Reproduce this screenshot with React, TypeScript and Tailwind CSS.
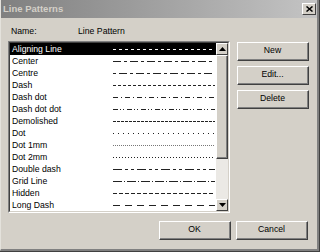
import React from "react";

type Pat = { name: string; dash: string; color?: string };

const patterns: Pat[] = [
  { name: "Aligning Line", dash: "3 3" },
  { name: "Center", dash: "8 3 3 3" },
  { name: "Centre", dash: "3 3 8 3" },
  { name: "Dash", dash: "3 2" },
  { name: "Dash dot", dash: "5 3 1 3" },
  { name: "Dash dot dot", dash: "5 2 1 2 1 3" },
  { name: "Demolished", dash: "3 1" },
  { name: "Dot", dash: "1 4" },
  { name: "Dot 1mm", dash: "1 1", color: "#777" },
  { name: "Dot 2mm", dash: "1 2" },
  { name: "Double dash", dash: "9 3 3 3 3 3" },
  { name: "Grid Line", dash: "9 2 1 2" },
  { name: "Hidden", dash: "4 2" },
  { name: "Long Dash", dash: "7 5" },
];

const font = { fontFamily: '"Liberation Sans", Arial, sans-serif' };

function WinButton({ label }: { label: string }) {
  return (
    <div className="w-[72px] h-[19px] border-t border-l border-t-white border-l-white border-r border-b border-r-[#404040] border-b-[#404040]">
      <div className="w-full h-full border-r border-b border-r-[#808080] border-b-[#808080] flex items-center justify-center text-[8.7px] text-black">
        {label}
      </div>
    </div>
  );
}

function ArrowBox({ up }: { up: boolean }) {
  return (
    <div className="w-[12px] h-[12px] bg-[#d4d0c8] border-t border-l border-t-white border-l-white border-r border-b border-r-[#404040] border-b-[#404040] flex items-center justify-center">
      <svg width="7" height="4" viewBox="0 0 7 4">
        {up ? (
          <polygon points="3.5,0 7,4 0,4" fill="#000" />
        ) : (
          <polygon points="0,0 7,0 3.5,4" fill="#000" />
        )}
      </svg>
    </div>
  );
}

export default function App() {
  return (
    <div
      className="w-[320px] h-[252px] bg-[#d4d0c8] overflow-hidden border-r border-b border-r-[#404040] border-b-[#404040]"
      style={font}
    >
      <div className="w-full h-full border-l border-l-[#e4e2dc] border-r-2 border-b-2 border-r-[#808080] border-b-[#808080] flex flex-col">
        {/* Title bar */}
        <div className="h-[18px] bg-gradient-to-r from-[#808080] to-[#c4c4c4] flex items-center justify-between pl-[2px] pr-[1px]">
          <span className="text-[9.5px] font-bold text-[#d4d0c8] leading-none">Line Patterns</span>
          <div className="w-[14px] h-[12px] bg-[#d4d0c8] border-t border-l border-t-white border-l-white border-r border-b border-r-[#404040] border-b-[#404040] flex items-center justify-center">
            <svg width="7" height="6" viewBox="0 0 7 6">
              <path d="M0.5 0.5 L6.5 5.5 M6.5 0.5 L0.5 5.5" stroke="#000" strokeWidth="1.5" />
            </svg>
          </div>
        </div>

        {/* Body */}
        <div className="flex pl-[7px]">
          <div className="flex flex-col w-[222px]">
            <div className="h-[23px] pt-[7px] flex text-[8.7px] leading-[12px] text-black">
              <span className="w-[70px] pl-[3px]">Name:</span>
              <span>Line Pattern</span>
            </div>
            {/* List box */}
            <div className="h-[172px] border border-t-[#808080] border-l-[#808080] border-b-white border-r-white">
              <div className="w-full h-full border border-t-[#404040] border-l-[#404040] border-b-[#d4d0c8] border-r-[#d4d0c8] bg-white flex">
                <div className="flex-1 flex flex-col">
                  {patterns.map((p, i) => {
                    const sel = i === 0;
                    return (
                      <div
                        key={p.name}
                        className={
                          "h-[12px] flex items-center text-[8.7px] leading-[12px] " +
                          (sel ? "bg-black text-white" : "text-black")
                        }
                      >
                        <span className="w-[103px] pl-[2px] whitespace-nowrap">{p.name}</span>
                        <svg width="102" height="12" viewBox="0 0 102 12">
                          <line
                            x1="0"
                            y1="6.5"
                            x2="102"
                            y2="6.5"
                            stroke={sel ? "#fff" : p.color ?? "#222"}
                            strokeWidth="1"
                            strokeDasharray={p.dash}
                          />
                        </svg>
                      </div>
                    );
                  })}
                </div>
                {/* Scrollbar */}
                <div className="w-[12px] flex flex-col bg-[#ebe9e5]">
                  <ArrowBox up />
                  <div className="h-[104px] bg-[#d4d0c8] border-t border-l border-t-white border-l-white border-r border-b border-r-[#404040] border-b-[#404040]">
                    <div className="w-full h-full border-r border-b border-r-[#808080] border-b-[#808080]" />
                  </div>
                  <div className="flex-1" />
                  <ArrowBox up={false} />
                </div>
              </div>
            </div>
          </div>
          <div className="ml-[7px] mt-[24px] flex flex-col gap-[5px]">
            <WinButton label="New" />
            <WinButton label="Edit..." />
            <WinButton label="Delete" />
          </div>
        </div>

        <div className="flex justify-end gap-[5px] pr-[9px] mt-[8px]">
          <WinButton label="OK" />
          <WinButton label="Cancel" />
        </div>
      </div>
    </div>
  );
}
